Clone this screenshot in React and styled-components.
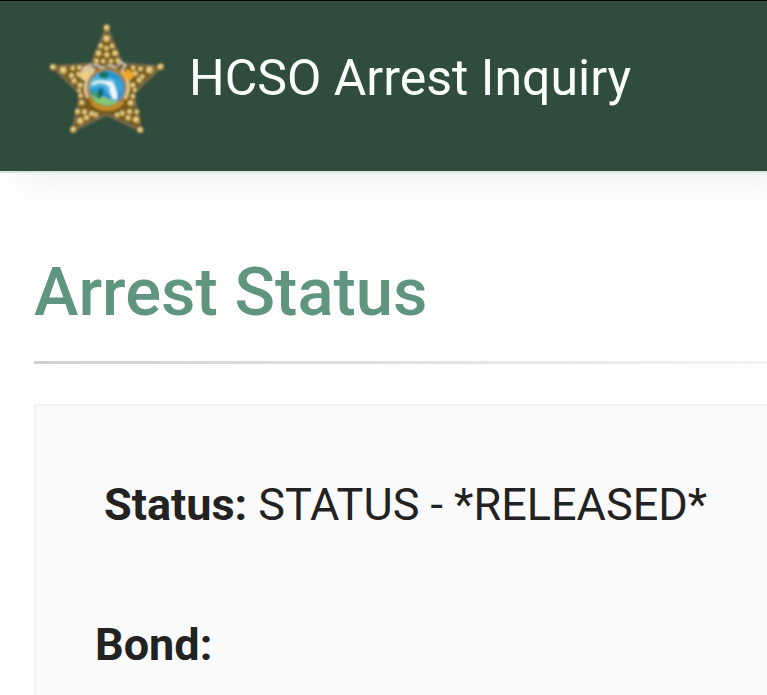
import React from "react";
import styled, { createGlobalStyle } from "styled-components";

const GlobalStyle = createGlobalStyle`
  * { box-sizing: border-box; }
  body {
    margin: 0;
    background: #fefefe;
    color: #222;
    font-family: Roboto, "Liberation Sans", sans-serif;
  }
`;

const Header = styled.header`
  display: flex;
  align-items: flex-start;
  gap: 14px;
  padding: 10px 40px 25px;
  background: #304c3d;
  border-top: 1px solid #000;
  border-bottom: 2px solid #dde4e0;
  box-shadow: 20px 8px 32px rgba(0, 0, 0, 0.06);
`;

const Badge = styled.svg`
  flex: none;
  width: 135px;
  height: 135px;
`;

const SiteTitle = styled.span`
  padding-top: 37px;
  color: #fafffc;
  font-size: 50px;
  line-height: 60px;
  white-space: nowrap;
`;

const Main = styled.main`
  padding: 79px 0 0 34px;
`;

const Heading = styled.h1`
  margin: 0;
  color: #60967f;
  font-size: 67px;
  font-weight: 500;
  line-height: 80px;
`;

const Divider = styled.hr`
  height: 3px;
  margin: 29px 0 40px;
  border: 0;
  background: linear-gradient(to right, #d0d0d0, #f3f3f3);
`;

const Panel = styled.dl`
  display: flex;
  flex-direction: column;
  gap: 80px;
  margin: 0;
  padding: 69px 0 20px 59px;
  background: #fafafa;
  border: 2px solid #f2f2f2;
  border-right: 0;
  border-bottom: 0;
`;

const Field = styled.div`
  display: flex;
  gap: 11px;
  padding-left: ${({ $inset }) => ($inset ? "9px" : "0")};
  font-size: 45px;
  line-height: 60px;
  white-space: nowrap;
`;

const Label = styled.dt`
  font-weight: 700;
`;

const Value = styled.dd`
  margin: 0;
`;

const beads = [
  [200, 50, 10], [200, 83, 11], [183, 105, 8], [217, 105, 8], [200, 112, 8],
  [176, 127, 10], [201, 132, 9], [226, 127, 10], [170, 150, 8], [190, 151, 8], [213, 151, 8], [234, 149, 8],
  [362, 167, 10], [329, 177, 12], [302, 174, 8], [307, 197, 8], [280, 171, 8], [286, 188, 9], [298, 208, 9], [279, 223, 9], [285, 238, 7],
  [301, 357, 10], [289, 326, 11], [265, 321, 9], [291, 303, 8], [269, 302, 9], [247, 307, 9], [232, 312, 8], [272, 276, 10], [279, 256, 8],
  [100, 356, 10], [121, 330, 11], [140, 320, 9], [113, 302, 9], [134, 303, 9], [156, 308, 9], [168, 312, 8], [126, 275, 9], [122, 254, 8],
  [39, 168, 10], [70, 178, 12], [99, 172, 8], [95, 194, 9], [119, 170, 8], [117, 190, 9], [103, 210, 9], [121, 223, 9], [118, 239, 7],
];

function StarBadge() {
  return (
    <Badge viewBox="0 0 405 405" role="img" aria-label="Sheriff star">
      <defs>
        <filter id="soft" x="-5%" y="-5%" width="110%" height="110%">
          <feGaussianBlur stdDeviation="2.5" />
        </filter>
        <clipPath id="seal">
          <circle cx="201" cy="231" r="53" />
        </clipPath>
      </defs>
      <g filter="url(#soft)">
        <path
          d="M200 48 L245 158 L363 167 L279 249 L303 359 L200 310 L98 359 L122 249 L37 167 L155 158 Z"
          fill="#75591f"
          stroke="#746849"
          strokeWidth="9"
          strokeLinejoin="round"
        />
        {beads.map(([x, y, r]) => (
          <g key={`${x}-${y}`}>
            <circle cx={x} cy={y} r={r} fill="#b99744" />
            <circle cx={x - 1} cy={y - 1} r={r * 0.6} fill="#e9d595" />
          </g>
        ))}
        <circle cx="201" cy="231" r="65" fill="#ad7d28" />
        <path d="M143 260 A64 64 0 0 1 160 181" fill="none" stroke="#d5c6a0" strokeWidth="9" />
        <path d="M156 274 A63 63 0 0 0 247 274" fill="none" stroke="#c78d25" strokeWidth="12" />
        <path d="M245 181 A66 66 0 0 1 255 263" fill="none" stroke="#e5cb8c" strokeWidth="9" />
        <path d="M129 168 L153 158 L167 173 L151 196 L137 211 L118 199 Z" fill="#d9c7a0" />
        <path d="M120 185 L145 182 L145 199 L128 207 Z" fill="#f3ce74" />
        <path d="M147 168 L168 160 L184 171 L207 163 L230 169 L242 152 L256 163 L244 181" fill="none" stroke="#c6bfa9" strokeWidth="7" />
        <path d="M154 164 L176 174 M190 160 L211 174 M224 159 L239 174" stroke="#75664a" strokeWidth="6" />
        <path d="M247 185 L263 175 L284 187 L274 207 L257 204 Z" fill="#efa825" />
        <g clipPath="url(#seal)">
          <rect x="147" y="177" width="108" height="108" fill="#2695d1" />
          <path d="M147 208 L180 190 L226 206 L230 245 L208 253 L190 225 L147 233 Z" fill="#54b9df" />
          <path d="M145 256 Q175 245 194 259 Q216 270 232 268 L230 288 H145 Z" fill="#83c875" />
          <path d="M151 244 L166 237 L176 247 L177 264 L160 257 Z" fill="#3b9e79" />
          <path d="M178 185 Q196 174 207 190 L200 204 L177 199 Z" fill="#17756b" />
          <path d="M178 232 L189 237 L188 253 L178 265 L173 250 Z" fill="#176565" />
          <path d="M153 218 L166 211 Q185 206 195 210 L215 211 Q226 224 231 245 L232 263 Q222 269 216 261 L210 243 L209 227 L193 217 L176 215 L155 222 Z" fill="#eef7f8" />
          <path d="M229 199 L245 215 L249 235 L237 250 L229 226 Z" fill="#3ba5d5" />
        </g>
      </g>
    </Badge>
  );
}

export default function App() {
  return (
    <>
      <GlobalStyle />
      <Header>
        <StarBadge />
        <SiteTitle>HCSO Arrest Inquiry</SiteTitle>
      </Header>
      <Main>
        <Heading>Arrest Status</Heading>
        <Divider />
        <Panel>
          <Field $inset>
            <Label>Status:</Label>
            <Value>STATUS - *RELEASED*</Value>
          </Field>
          <Field>
            <Label>Bond:</Label>
          </Field>
        </Panel>
      </Main>
    </>
  );
}
